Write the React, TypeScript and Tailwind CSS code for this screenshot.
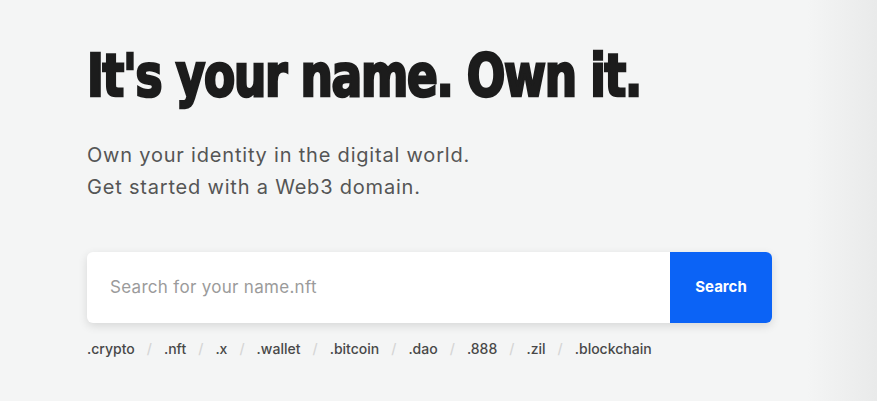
import { Fragment } from 'react';

const tlds = ['.crypto', '.nft', '.x', '.wallet', '.bitcoin', '.dao', '.888', '.zil', '.blockchain'];

export default function App() {
  return (
    <div className="relative h-[401px] w-[877px] overflow-hidden bg-[#f4f5f5] font-['Inter',sans-serif]">
      {/* soft shade on the right edge */}
      <div className="pointer-events-none absolute inset-y-0 right-0 w-[70px] bg-gradient-to-r from-transparent to-[#e9eaea]" />

      <main className="relative pl-[87px] pt-[38px]">
        <h1 className="origin-left scale-x-[0.87] font-['DejaVu_Sans_Condensed','Liberation_Sans',sans-serif] text-[58px] font-bold leading-[76px] tracking-[-1.5px] whitespace-nowrap text-[#1c1c1c] [-webkit-text-stroke:2.5px_#1c1c1c]">
          It's your name. Own it.
        </h1>

        <p className="mt-[25px] text-[20px] leading-[32px] tracking-[0.8px] text-[#555]">
          Own your identity in the digital world.
          <br />
          Get started with a Web3 domain.
        </p>

        <div className="mt-[49px] flex h-[71px] w-[685px] overflow-hidden rounded-md bg-white shadow-[0_3px_10px_rgba(0,0,0,0.12)]">
          <div className="flex flex-1 items-center pl-[23px] text-[17px] tracking-[0.3px] text-[#9b9b9b]">
            Search for your name.nft
          </div>
          <button className="w-[102px] bg-[#0b63f6] text-[15px] font-bold text-white">Search</button>
        </div>

        <div className="mt-[15px] flex items-center text-[14px] font-medium text-[#484848]">
          {tlds.map((t, i) => (
            <Fragment key={t}>
              {i > 0 && <span className="mx-[12px] text-[#d6d6d6]">/</span>}
              <span>{t}</span>
            </Fragment>
          ))}
        </div>
      </main>
    </div>
  );
}
